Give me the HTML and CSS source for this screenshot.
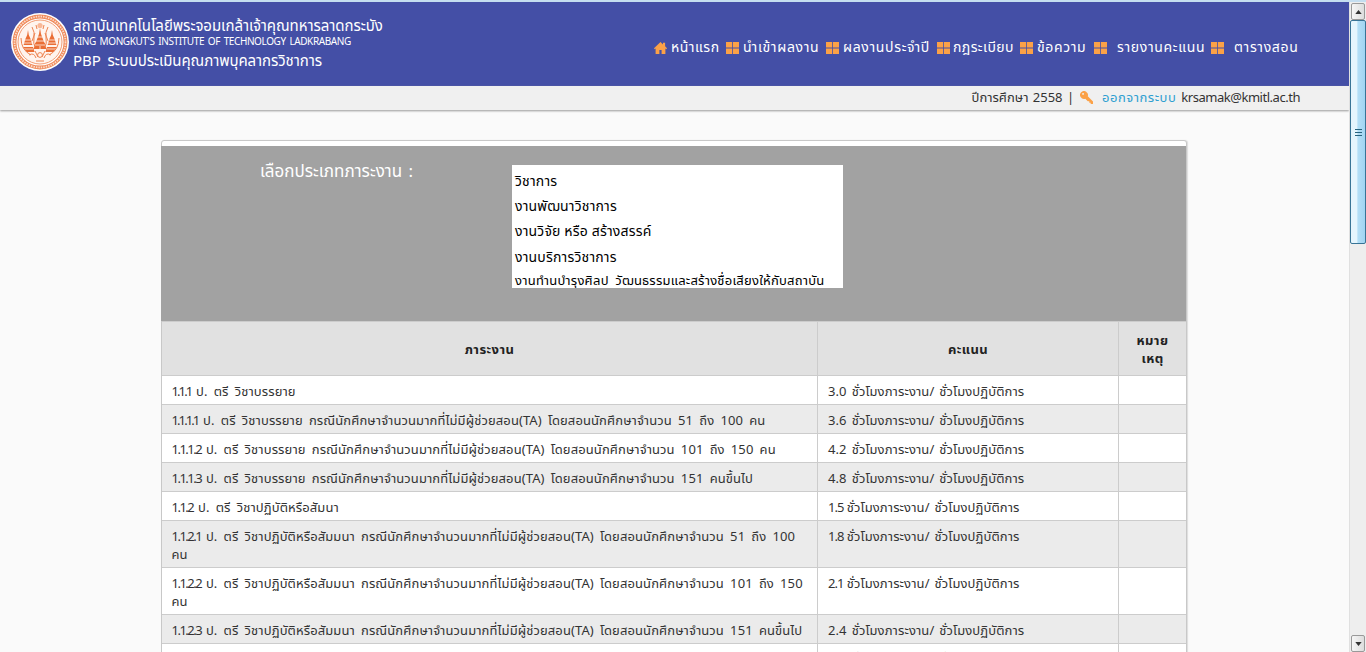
FILE: index.html
```html
<!DOCTYPE html>
<html lang="th">
<head>
<meta charset="utf-8">
<title>PBP ระบบประเมินคุณภาพบุคลากรวิชาการ</title>
<link rel="stylesheet" href="styles.css">
</head>
<body>
<svg class="defs" width="0" height="0" aria-hidden="true">
  <symbol id="grid" viewBox="0 0 13 12"><path d="M0 0h6.200v5.600H0zM7 0h6v5.600H7zM0 6.400h6.200V12H0zM7 6.400h6V12H7z"/></symbol>
  <symbol id="home" viewBox="0 0 13 12"><path d="M6.500 0 0 6.200l.6 1 1-.6V12h3.800V8h2.200v4h3.800V6.600l1 .6.6-1-1.900-1.900V.8H9v1.600z"/></symbol>
  <symbol id="key" viewBox="0 0 13 13"><path fill-rule="evenodd" d="M1.200 1.200A4 4 0 0 1 7.800 5.300L13 10.600V13h-2.300v-1.200H9.300v-1.500H7.800L5.300 7.800A4 4 0 0 1 1.200 1.200zM2.400 2.300a.9.9 0 1 0 1.300 1.300.9.9 0 0 0-1.300-1.300z"/></symbol>
</svg>
<div class="window">
  <div class="page">
    <header class="header">
      <div class="brand">
        <svg class="seal" viewBox="0 0 58 58">
          <circle cx="29" cy="29" r="29" fill="#fff"/>
          <circle cx="29" cy="29" r="25.500" fill="none" stroke="#f08a5a" stroke-width="3.800"/>
          <circle cx="29" cy="29" r="25.500" fill="none" stroke="#fbdccc" stroke-width="1.800" stroke-dasharray="1.500 1"/>
          <circle cx="29" cy="29" r="22" fill="#fff4ee" stroke="#ee8350" stroke-width=".8"/>
          <g fill="#ea6e35">
            <path d="M29 15l1 6 1.500 4 1.500 4 2 3h-1l1.500 4h-13l1.500-4h-1l2-3 1.500-4 1.500-4z"/>
            <path d="M17 17l.8 5 1.800 4 1.800 6h-8.800l1.800-6 1.800-4zM41 17l.8 5 1.800 4 1.800 6h-8.800l1.800-6 1.800-4z"/>
            <path d="M12 34h10l1.500 5h-8zM46 34H36l-1.500 5h8z"/>
          </g>
          <g fill="none" stroke="#fff4ee" stroke-width=".8">
            <path d="M25 24h8M24 28h10M22 32h14M29 33v4M13 27h8M12 30h10M37 27h8M36 30h10M12 36h10M36 36h10"/>
          </g>
          <g fill="none" stroke="#ee8350" stroke-width="1">
            <path d="M10 25q0 12 10 17M48 25q0 12-10 17M21 14q3 5 2 11t1 9M37 14q-3 5-2 11t-1 9M24 20l-3 8M34 20l3 8M24 38l3 6M34 38l-3 6M18 42q5-3 7 3M40 42q-5-3-7 3M25 48h8M25 12l1 4M33 12l-1 4"/>
            <circle cx="29" cy="42" r="2.400"/>
          </g>
          <circle cx="29" cy="12.500" r="2.600" fill="#f8b898"/>
        </svg>
        <div class="names">
          <div class="name-th">สถาบันเทคโนโลยีพระจอมเกล้าเจ้าคุณทหารลาดกระบัง</div>
          <div class="name-en">KING MONGKUT'S INSTITUTE OF TECHNOLOGY LADKRABANG</div>
          <div class="name-app">PBP ระบบประเมินคุณภาพบุคลากรวิชาการ</div>
        </div>
      </div>
      <nav class="menu">
        <a class="item home"><svg class="ico"><use href="#home"/></svg><span>หน้าแรก</span></a>
        <a class="item submit"><svg class="ico"><use href="#grid"/></svg><span>นำเข้าผลงาน</span></a>
        <a class="item yearly"><svg class="ico"><use href="#grid"/></svg><span>ผลงานประจำปี</span></a>
        <a class="item rules"><svg class="ico"><use href="#grid"/></svg><span>กฎระเบียบ</span></a>
        <a class="item msg"><svg class="ico"><use href="#grid"/></svg><span>ข้อความ</span></a>
        <a class="item score wide"><svg class="ico"><use href="#grid"/></svg><span>รายงานคะแนน</span></a>
        <a class="item teach wide"><svg class="ico"><use href="#grid"/></svg><span>ตารางสอน</span></a>
      </nav>
    </header>
    <div class="userbar">
      <span class="year">ปีการศึกษา 2558 |</span>
      <svg class="key"><use href="#key"/></svg>
      <a class="logout">ออกจากระบบ</a>
      <span class="mail">krsamak@kmitl.ac.th</span>
    </div>
    <main class="card">
      <section class="filter">
        <div class="label">เลือกประเภทภาระงาน :</div>
        <div class="options">
          <div class="opt">วิชาการ</div>
          <div class="opt">งานพัฒนาวิชาการ</div>
          <div class="opt">งานวิจัย หรือ สร้างสรรค์</div>
          <div class="opt">งานบริการวิชาการ</div>
          <div class="opt long">งานทำนบำรุงศิลป วัฒนธรรมและสร้างชื่อเสียงให้กับสถาบัน</div>
        </div>
      </section>
      <div class="table">
        <div class="row head"><div>ภาระงาน</div><div>คะแนน</div><div>หมาย<br>เหตุ</div></div>
        <div class="row"><div><b class="n3">1.1.1</b> ป. ตรี วิชาบรรยาย</div><div>3.0 ชั่วโมงภาระงาน/ ชั่วโมงปฏิบัติการ</div><div></div></div>
        <div class="row alt"><div><b class="n3">1.1.1.1</b> ป. ตรี วิชาบรรยาย กรณีนักศึกษาจำนวนมากที่ไม่มีผู้ช่วยสอน(TA) โดยสอนนักศึกษาจำนวน 51 ถึง 100 คน</div><div>3.6 ชั่วโมงภาระงาน/ ชั่วโมงปฏิบัติการ</div><div></div></div>
        <div class="row"><div><b class="n2">1.1.1.2</b> ป. ตรี วิชาบรรยาย กรณีนักศึกษาจำนวนมากที่ไม่มีผู้ช่วยสอน(TA) โดยสอนนักศึกษาจำนวน 101 ถึง 150 คน</div><div>4.2 ชั่วโมงภาระงาน/ ชั่วโมงปฏิบัติการ</div><div></div></div>
        <div class="row alt"><div><b class="n2">1.1.1.3</b> ป. ตรี วิชาบรรยาย กรณีนักศึกษาจำนวนมากที่ไม่มีผู้ช่วยสอน(TA) โดยสอนนักศึกษาจำนวน 151 คนขึ้นไป</div><div>4.8 ชั่วโมงภาระงาน/ ชั่วโมงปฏิบัติการ</div><div></div></div>
        <div class="row"><div><b class="n2">1.1.2</b> ป. ตรี วิชาปฏิบัติหรือสัมนา</div><div><b class="n1">1.5</b> ชั่วโมงภาระงาน/ ชั่วโมงปฏิบัติการ</div><div></div></div>
        <div class="row alt tall"><div><b class="n2">1.1.2.1</b> ป. ตรี วิชาปฏิบัติหรือสัมมนา กรณีนักศึกษาจำนวนมากที่ไม่มีผู้ช่วยสอน(TA) โดยสอนนักศึกษาจำนวน 51 ถึง 100<br>คน</div><div><b class="n1">1.8</b> ชั่วโมงภาระงาน/ ชั่วโมงปฏิบัติการ</div><div></div></div>
        <div class="row tall"><div><b class="n2">1.1.2.2</b> ป. ตรี วิชาปฏิบัติหรือสัมมนา กรณีนักศึกษาจำนวนมากที่ไม่มีผู้ช่วยสอน(TA) โดยสอนนักศึกษาจำนวน 101 ถึง 150<br>คน</div><div><b class="n1">2.1</b> ชั่วโมงภาระงาน/ ชั่วโมงปฏิบัติการ</div><div></div></div>
        <div class="row alt"><div><b class="n2">1.1.2.3</b> ป. ตรี วิชาปฏิบัติหรือสัมมนา กรณีนักศึกษาจำนวนมากที่ไม่มีผู้ช่วยสอน(TA) โดยสอนนักศึกษาจำนวน 151 คนขึ้นไป</div><div>2.4 ชั่วโมงภาระงาน/ ชั่วโมงปฏิบัติการ</div><div></div></div>
        <div class="row"><div></div><div>3.0 ชั่วโมงภาระงาน/ ชั่วโมงปฏิบัติการ</div><div></div></div>
      </div>
    </main>
  </div>
  <div class="scrollbar">
    <div class="arrow"><svg viewBox="0 0 8 5"><path d="M0 5 4 0l4 5z"/></svg></div>
    <div class="thumb"><i></i><i></i><i></i></div>
    <div class="track"></div>
    <div class="arrow"><svg viewBox="0 0 8 5"><path d="M0 0h8L4 5z"/></svg></div>
  </div>
</div>
</body>
</html>
```
FILE: styles.css
```css
* { box-sizing: border-box; }
body { margin: 0; overflow: hidden; background: #fafafa; color: #333; font: 13px/18px "Noto Sans Thai", "Noto Sans", "Open Sans", sans-serif; white-space: nowrap; }
.defs { position: absolute; }
.window { display: flex; height: 652px; border-top: 2px solid #c5def0; }
.page { width: 1349px; overflow: hidden; }
.header { height: 84px; background: #444fa6; color: #fff; display: flex; justify-content: space-between; padding: 0 49px 0 11px; }
.brand { display: flex; gap: 4px; padding-top: 11px; }
.seal { width: 58px; height: 58px; }
.names { padding-top: 4px; }
.name-th { font-size: 15px; line-height: 19px; letter-spacing: -.05px; }
.name-en { font-size: 10px; line-height: 13px; letter-spacing: -.4px; word-spacing: 1.500px; }
.name-app { font-size: 15px; line-height: 26px; letter-spacing: -.08px; word-spacing: 3px; }
.menu { display: flex; padding-top: 36px; height: 60px; }
.item { display: flex; align-items: center; height: 20px; gap: 4px; font-size: 14px; letter-spacing: .65px; }
.item.wide { gap: 10px; }
.ico { width: 13px; height: 12px; fill: #fba147; flex: none; }
.home { width: 72px; } .submit { width: 100px; } .yearly { width: 111px; } .rules { width: 83px; }
.item.home { letter-spacing: .5px; }
.item.rules { letter-spacing: .4px; gap: 3px; }
.msg { width: 74px; } .score { width: 117px; } .teach { width: 89px; }
.userbar { height: 24px; background: #f0f0f0; display: flex; align-items: center; justify-content: flex-end; padding-right: 49px; box-shadow: 0 1px 2px #999; }
.year { word-spacing: 1px; }
.key { width: 13px; height: 13px; fill: #fba147; margin: -1px 9px 0 6px; }
.logout { color: #2f9fd0; margin-right: 5px; letter-spacing: .5px; }
.mail { letter-spacing: -.47px; }
.card { width: 1026px; height: 530px; margin: 30px 0 0 161px; background: #fff; border: 1px solid #c8c8c8; border-radius: 3px 3px 0 0; padding-top: 5px; box-shadow: 1px 0 1px #ddd; }
.filter { height: 175px; background: #a2a2a2; display: flex; margin-left: -1px; padding: 19px 0 0 99px; }
.label { width: 252px; color: #fff; font-size: 17px; line-height: 15px; word-spacing: 2px; }
.options { width: 331px; height: 123px; background: #fff; color: #000; padding: 3px 0 0 3px; overflow: hidden; }
.opt { height: 25.200px; line-height: 27px; font-size: 14px; letter-spacing: .18px; }
.opt.long { height: 20px; line-height: 25px; font-size: 13px; letter-spacing: .22px; word-spacing: 3px; }
.row { display: grid; grid-template-columns: 656px 301px 67px; height: 29px; border-top: 1px solid #ccc; background: #fff; letter-spacing: .1px; word-spacing: 2.700px; }
.row > div { padding: 7px 0 0 9.500px; border-right: 1px solid #ccc; }
.row > div + div { padding-left: 10px; word-spacing: 1.500px; }
.row > div:last-child { border-right: 0; }
.row b { font-weight: normal; margin-right: -1.500px; }
.n1 { letter-spacing: -1px; }
.n2 { letter-spacing: -1.500px; }
.n3 { letter-spacing: -1.900px; }
.row.alt { background: #ebebeb; }
.row.tall { height: 47px; }
.row.head { height: 54px; background: #e1e1e1; color: #222; font-weight: bold; text-align: center; letter-spacing: .4px; }
.row.head > div { display: flex; align-items: center; justify-content: center; padding: 2px 0 0; }
.scrollbar { width: 17px; background: #eee; border-left: 1px solid #e0e0e0; display: flex; flex-direction: column; }
.arrow { height: 17px; margin: 1px 1px 0; border: 1px solid #999; border-radius: 2px; background: linear-gradient(90deg, #f6f6f6, #ddd); display: flex; align-items: center; justify-content: center; }
.arrow svg { width: 7px; height: 4px; fill: #333; }
.thumb { height: 224px; border: 1px solid #387496; border-radius: 2px; background: linear-gradient(90deg, #e5f5fd 0 40%, #b3def6 50%, #a0d5f2); display: flex; flex-direction: column; gap: 2px; justify-content: center; align-items: center; }
.thumb i { width: 7px; height: 1px; background: #27647f; }
.track { flex: 1; }
```
